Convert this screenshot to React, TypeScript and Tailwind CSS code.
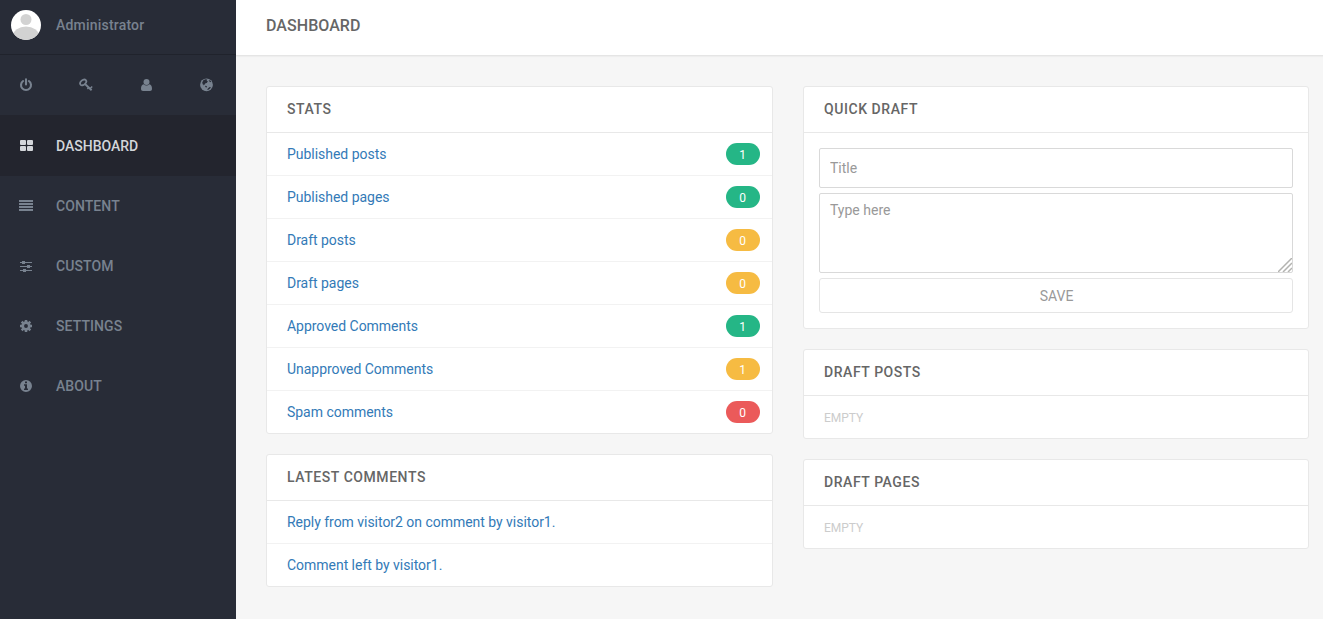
import type { ReactNode } from "react";

const icons: Record<string, ReactNode> = {
  power: (
    <g fill="none" stroke="currentColor" strokeWidth="2.1" strokeLinecap="round">
      <path d="M4.100 3a5 5 0 1 0 5.800 0M7 1.200v5.300" />
    </g>
  ),
  key: (
    <g fill="none" stroke="currentColor">
      <ellipse cx="4.2" cy="4.4" rx="3.500" ry="2.300" strokeWidth="1.800" transform="rotate(-42 4.2 4.4)" />
      <path d="M6 6l6.600 6.300" strokeWidth="1.900" />
      <path d="M8.400 11l1.700-1.700M11 10.800l2.200-2.300" strokeWidth="1.500" />
    </g>
  ),
  user: (
    <g fill="currentColor" transform="translate(.5 0)">
      <circle cx="7" cy="4" r="3" />
      <path d="M4.200 6.300C2.300 6.500 1.500 8.300 1.500 10.800c0 1.400.8 2.200 2 2.200h7c1.200 0 2-.8 2-2.200 0-2.500-.8-4.300-2.700-4.500a3.800 3.800 0 0 1-5.600 0z" />
    </g>
  ),
  globe: (
    <g>
      <circle cx="7.500" cy="6.800" r="6.400" fill="currentColor" />
      <path
        fill="#282c37"
        d="M4.300 2.300L6.500 1.300 8.300 1.500 7.600 2.700 8.900 3.300 7.800 5 6.400 5.300 5.700 6.700 4.600 6.200 5 7.500 4 6.700 3.200 4.800zM9.600 2.200l1.700.3.900 1.300-1.200.5zM8.200 11.900l.7-1.500 1.700-1.500 1.300.3-.8 1.400-1.700 1.200zM6.200 7.800l1.300.2.600 1-.8.5-1-.6z"
      />
    </g>
  ),
  grid: (
    <g fill="currentColor">
      <rect x="1" y="1" width="6" height="5" rx="1" />
      <rect x="8" y="1" width="6" height="5" rx="1" />
      <rect x="1" y="7" width="6" height="5" rx="1" />
      <rect x="8" y="7" width="6" height="5" rx="1" />
    </g>
  ),
  lines: <path fill="currentColor" d="M0 1h14v2H0zM0 4h14v2H0zM0 7h14v2H0zM0 10h14v2H0z" />,
  sliders: (
    <g fill="currentColor">
      <path d="M1 3h12v1H1zM1 7h12v1H1zM1 11h12v1H1z" />
      <path d="M3 2h3v3H3zM8 6h3v3H8zM4 10h3v3H4z" />
    </g>
  ),
  gear: (
    <g>
      <circle cx="7" cy="7" r="3.300" fill="none" stroke="currentColor" strokeWidth="2.700" />
      <path
        stroke="currentColor"
        strokeWidth="2.500"
        d="M7 1v2.200M7 10.800V13M1 7h2.200M10.800 7H13M2.700 2.700l1.600 1.600M9.700 9.700l1.600 1.600M11.300 2.700L9.700 4.300M4.300 9.700l-1.600 1.600"
      />
    </g>
  ),
  info: (
    <path
      fill="currentColor"
      fillRule="evenodd"
      d="M7 1a6 6 0 1 0 0 12A6 6 0 0 0 7 1zM6 2.500h2v1.700H6zM5 5.200h3v4.300h1V11H5V9.500h1V6.700H5z"
    />
  ),
};

function Icon({ name }: { name: string }) {
  return (
    <svg className="block h-3.5 w-[15px] shrink-0" viewBox="0 0 15 14">
      {icons[name]}
    </svg>
  );
}

const nav = [
  ["lines", "CONTENT"],
  ["sliders", "CUSTOM"],
  ["gear", "SETTINGS"],
  ["info", "ABOUT"],
];

const stats = [
  ["Published posts", "1", "bg-[#25b686]"],
  ["Published pages", "0", "bg-[#25b686]"],
  ["Draft posts", "0", "bg-[#f6bb42]"],
  ["Draft pages", "0", "bg-[#f6bb42]"],
  ["Approved Comments", "1", "bg-[#25b686]"],
  ["Unapproved Comments", "1", "bg-[#f6bb42]"],
  ["Spam comments", "0", "bg-[#eb5a5a]"],
];

function Panel({ title, children }: { title: string; children: ReactNode }) {
  return (
    <section className="rounded-[3px] border border-[#e8e8e8] bg-white">
      <h2 className="h-[46px] border-b border-[#e8e8e8] pl-5 text-sm leading-[45px] font-medium tracking-[0.56px] text-[#666]">
        {title}
      </h2>
      {children}
    </section>
  );
}

function Row({ label, children }: { label: string; children?: ReactNode }) {
  return (
    <li className="flex h-[43px] items-center justify-between border-b border-[#f2f2f2] pr-3 pl-5 last:h-[42px] last:border-b-0">
      <a href="#" className="tracking-[-0.03px] text-[#337ab7]">{label}</a>
      {children}
    </li>
  );
}

function Empty() {
  return <p className="h-[42px] pl-5 text-xs leading-[45px] text-[#ccc]">EMPTY</p>;
}

export default function App() {
  return (
    <div className="flex h-[619px] overflow-hidden bg-[#f6f6f6] font-['Roboto',sans-serif] text-sm leading-5">
      <aside className="w-[236px] shrink-0 bg-[#282c37] font-medium text-[#78828f]">
        <div className="flex h-[55px] items-center border-b border-[#20232c] pb-1 pl-[11px]">
          <svg className="h-[30px] w-[30px]" viewBox="0 0 30 30">
            <defs>
              <clipPath id="avatar">
                <circle cx="15" cy="15" r="15" />
              </clipPath>
            </defs>
            <g clipPath="url(#avatar)">
              <path fill="#fff" d="M0 0h30v30H0z" />
              <circle cx="15" cy="9.500" r="5.500" fill="#d2d2d2" />
              <ellipse cx="15" cy="26" rx="13" ry="9.500" fill="#d2d2d2" />
            </g>
          </svg>
          <span className="ml-[15px] tracking-[0.2px]">Administrator</span>
        </div>
        <div className="flex h-15 items-center gap-[45px] pl-[19px]">
          <Icon name="power" />
          <Icon name="key" />
          <Icon name="user" />
          <Icon name="globe" />
        </div>
        <nav>
          <a href="#" className="flex h-[61px] items-center bg-[#23252e] pl-[19px] text-[#d3d6da]">
            <Icon name="grid" />
            <span className="ml-[22px]">DASHBOARD</span>
          </a>
          {nav.map(([icon, label]) => (
            <a key={label} href="#" className="flex h-15 items-center pl-[19px]">
              <Icon name={icon} />
              <span className="ml-[22px] tracking-[0.08px]">{label}</span>
            </a>
          ))}
        </nav>
      </aside>
      <div className="min-w-0 grow">
        <header className="h-14 border-b border-[#e5e5e5] bg-white pl-[30px] shadow-[0_1px_1px_rgba(0,0,0,0.03)]">
          <h1 className="text-base leading-[51px] font-medium tracking-[0.05px] text-[#666]">DASHBOARD</h1>
        </header>
        <main className="flex items-start gap-[30px] pt-[30px] pr-3.5 pl-[30px]">
          <div className="flex w-[507px] flex-col gap-5">
            <Panel title="STATS">
              <ul>
                {stats.map(([label, count, color]) => (
                  <Row key={label} label={label}>
                    <span className={`h-[22px] w-[34px] rounded-full pr-px text-center text-xs leading-[24px] text-white ${color}`}>
                      {count}
                    </span>
                  </Row>
                ))}
              </ul>
            </Panel>
            <Panel title="LATEST COMMENTS">
              <ul>
                <Row label="Reply from visitor2 on comment by visitor1." />
                <Row label="Comment left by visitor1." />
              </ul>
            </Panel>
          </div>
          <div className="flex w-[506px] flex-col gap-5">
            <Panel title="QUICK DRAFT">
              <form className="flex flex-col gap-[5px] p-[15px]">
                <input
                  placeholder="Title"
                  className="h-10 rounded-[2px] border border-[#d9d9d9] px-2.5 placeholder:text-[#999]"
                />
                <div className="relative flex">
                  <textarea
                    placeholder="Type here"
                    className="h-20 w-full resize-none rounded-[2px] border border-[#d9d9d9] px-2.5 py-1.5 placeholder:text-[#999]"
                  />
                  <svg className="absolute right-px bottom-px h-3.5 w-3.5" viewBox="0 0 14 14">
                    <path d="M0 14L14 0M5 14l9-9M10 14l4-4" stroke="#b3b3b0" strokeWidth="1.500" />
                  </svg>
                </div>
                <button type="button" className="h-[35px] rounded-[3px] border border-[#e5e5e5] pl-px text-[#999]">
                  SAVE
                </button>
              </form>
            </Panel>
            <Panel title="DRAFT POSTS">
              <Empty />
            </Panel>
            <Panel title="DRAFT PAGES">
              <Empty />
            </Panel>
          </div>
        </main>
      </div>
    </div>
  );
}
